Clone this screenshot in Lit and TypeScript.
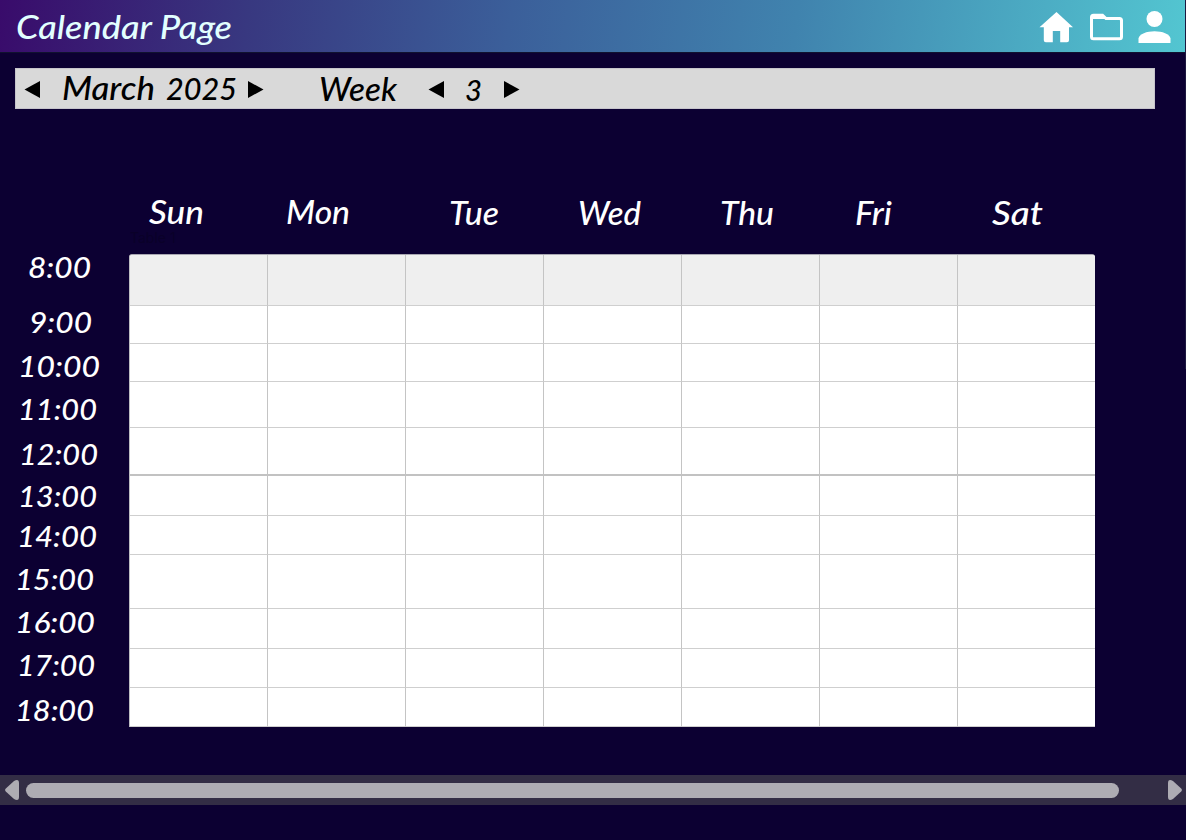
import { LitElement, html, css, svg } from "lit";
import { customElement, property } from "lit/decorators.js";

type Label = { text: string; x: number; w: number; h: number };

const DAYS: Label[] = [
  { text: "Sun", x: 149, w: 55, h: 224 },
  { text: "Mon", x: 286, w: 64, h: 224 },
  { text: "Tue", x: 449, w: 50, h: 225 },
  { text: "Wed", x: 578, w: 63, h: 225 },
  { text: "Thu", x: 720, w: 54, h: 225 },
  { text: "Fri", x: 855, w: 37, h: 225 },
  { text: "Sat", x: 992, w: 51, h: 225 },
];

// h is the distance from the previous label's baseline
const TIMES: Label[] = [
  { text: "8:00", x: 28, w: 63, h: 29 },
  { text: "9:00", x: 29, w: 63, h: 55 },
  { text: "10:00", x: 18, w: 82, h: 44 },
  { text: "11:00", x: 18, w: 79, h: 43 },
  { text: "12:00", x: 19, w: 79, h: 45 },
  { text: "13:00", x: 18, w: 79, h: 42 },
  { text: "14:00", x: 17, w: 80, h: 40 },
  { text: "15:00", x: 15, w: 79, h: 43 },
  { text: "16:00", x: 15, w: 80, h: 43 },
  { text: "17:00", x: 17, w: 78, h: 43 },
  { text: "18:00", x: 15, w: 79, h: 45 },
];

const ROWS = [51, 38, 38, 46, 48, 40, 39, 54, 40, 39, 39];

@customElement("script-label")
class ScriptLabel extends LitElement {
  @property() text = "";
  @property({ type: Number }) w = 50;
  @property({ type: Number }) h = 30;
  @property({ type: Number }) size = 31;

  static styles = css`
    :host { display: block; flex: none; }
    svg { display: block; overflow: visible; }
    text {
      font-family: Lato, "Open Sans", sans-serif;
      font-style: italic;
      font-weight: 500;
      fill: currentColor;
    }
  `;

  render() {
    return html`<svg width=${this.w} height=${this.h}>
      ${svg`<text x="0" y=${this.h} font-size=${this.size} textLength=${this.w} lengthAdjust="spacingAndGlyphs">${this.text}</text>`}
    </svg>`;
  }
}

@customElement("app-root")
class AppRoot extends LitElement {
  static styles = css`
    :host {
      display: flex;
      flex-direction: column;
      position: relative;
      width: 1186px;
      height: 840px;
      overflow: hidden;
      background: #0c0032;
      color: #fff;
      font-family: Lato, sans-serif;
    }
    svg { display: block; flex: none; }
    .edge {
      position: absolute;
      right: 0;
      top: 0;
      width: 1px;
      height: 369px;
      background: #1d1840;
    }
    .header {
      display: flex;
      height: 52px;
      flex: none;
      border-bottom: 1px solid #10122f;
      box-sizing: content-box;
      background: linear-gradient(98deg, #390b6b 0%, #383880 21%, #3b5f9a 43%, #4083ae 67%, #53c6d1 100%);
      color: #e2ffff;
    }
    .title { padding-left: 16px; flex: 1; }
    .icons { display: flex; align-items: flex-start; padding: 11px 15px 0 0; gap: 16px; }
    .toolbar {
      display: flex;
      flex: none;
      width: 1140px;
      height: 41px;
      margin: 15px 0 0 15px;
      background: #d9d9d9;
      box-shadow: inset 0 0 0 1px #c6c4cb;
      color: #000;
    }
    .arrow { margin-top: 12px; }
    .days { display: grid; flex: none; height: 145px; }
    .days script-label { grid-area: 1 / 1; }
    .main { display: flex; flex: none; height: 473px; }
    .times { width: 129px; flex: none; margin-top: -5px; }
    .table-area { flex: none; }
    .caption {
      height: 20px;
      margin: -26px 0 6px;
      padding-left: 1px;
      font: 14px/20px Inter, sans-serif;
      color: #0a0029;
    }
    .table {
      display: grid;
      grid-template-columns: 138px 138px 138px 138px 138px 138px 138px;
      box-sizing: border-box;
      width: 966px;
      border-left: 1px solid #bdbdc2;
      border-top: 1px solid #a9a7b2;
      border-radius: 3px 3px 0 0;
      overflow: hidden;
      background: #fff;
    }
    .cell {
      box-sizing: border-box;
      border-right: 1px solid #c4c4c4;
      border-bottom: 1px solid #cfcfcf;
    }
    .cell.head { background: #efefef; }
    .cell.split { border-bottom: 2px solid #c2c2c2; }
    .scroll {
      display: flex;
      align-items: center;
      justify-content: space-between;
      flex: none;
      height: 30px;
      margin-top: 48px;
      padding: 0 4px 0 5px;
      background: #332d45;
    }
    .thumb {
      width: 1093px;
      height: 15px;
      border-radius: 8px;
      background: #aeacb3;
      margin: 0 auto 0 7px;
    }
  `;

  private arrow(dir: "l" | "r", left: number) {
    return html`<svg class="arrow" style="margin-left:${left}px" width="17" height="19" viewBox="0 0 17 19">
      <path d=${dir === "l" ? "M16 1V18L0.5 9.5Z" : "M1 1V18L16.5 9.5Z"} fill="#000" />
    </svg>`;
  }

  render() {
    return html`
      <div class="header">
        <div class="title"><script-label text="Calendar Page" .w=${216} .h=${39} .size=${33}></script-label></div>
        <div class="icons">
          <svg width="34" height="32" viewBox="0 0 34 32">
            <path d="M17.5 1L0.5 16.2H4.8V29.2Q4.8 31.2 6.8 31.2H13.8V20H21.2V31.2H28Q30 31.2 30 29.2V16.2H34Z" fill="#fff" />
          </svg>
          <svg width="33" height="32" viewBox="-1 0 33 32" overflow="visible">
            <path d="M3.5 4.2H12.5L16 7.6H29.5Q31.5 7.6 31.5 9.6V25.8Q31.5 27.8 29.5 27.8H3.5Q1.5 27.8 1.5 25.8V6.2Q1.5 4.2 3.5 4.2Z" fill="none" stroke="#fff" stroke-width="3" />
            <path d="M2 3.5H12L16 8H2Z" fill="#fff" />
          </svg>
          <svg width="33" height="32" viewBox="0 0 33 32">
            <circle cx="16.5" cy="8" r="8" fill="#fff" />
            <path d="M0.5 32V27.5C1 23 9 20.2 16.5 20.2S32 23 32.5 27.5V32Z" fill="#fff" />
          </svg>
        </div>
      </div>

      <div class="toolbar">
        ${this.arrow("l", 9)}
        <script-label style="margin-left:21px" text="March" .w=${93} .h=${32} .size=${32}></script-label>
        <script-label style="margin-left:11px" text="2025" .w=${71} .h=${32} .size=${30}></script-label>
        ${this.arrow("r", 10)}
        <script-label style="margin-left:55px" text="Week" .w=${78} .h=${33} .size=${32}></script-label>
        ${this.arrow("l", 31)}
        <script-label style="margin-left:20px" text="3" .w=${17} .h=${33} .size=${29}></script-label>
        ${this.arrow("r", 21)}
      </div>

      <div class="days">
        ${DAYS.map((d) => html`<script-label style="margin-left:${d.x}px" .text=${d.text} .w=${d.w} .h=${d.h - 109} .size=${33}></script-label>`)}
      </div>

      <div class="main">
        <div class="times">
          ${TIMES.map((t) => html`<script-label style="margin-left:${t.x}px" .text=${t.text} .w=${t.w} .h=${t.h} .size=${29}></script-label>`)}
        </div>
        <div class="table-area">
          <div class="caption">Table 1</div>
          <div class="table" style="grid-template-rows:${ROWS.map((r) => r + "px").join(" ")}">
            ${ROWS.map((_, r) =>
              Array.from({ length: 7 }, () => html`<div class="cell ${r === 0 ? "head" : r === 4 ? "split" : ""}"></div>`)
            )}
          </div>
        </div>
      </div>

      <div class="scroll">
        <svg width="14" height="20" viewBox="0 0 14 20">
          <path d="M0.8 8.5L9 1Q14 -1.5 14 3V17Q14 21.5 9 19L0.8 11.5Q-0.6 10 0.8 8.5Z" fill="#aeacb3" />
        </svg>
        <div class="thumb"></div>
        <svg width="14" height="20" viewBox="0 0 14 20">
          <path d="M13.2 8.5L5 1Q0 -1.5 0 3V17Q0 21.5 5 19L13.2 11.5Q14.6 10 13.2 8.5Z" fill="#aeacb3" />
        </svg>
      </div>
      <div class="edge"></div>
    `;
  }
}
